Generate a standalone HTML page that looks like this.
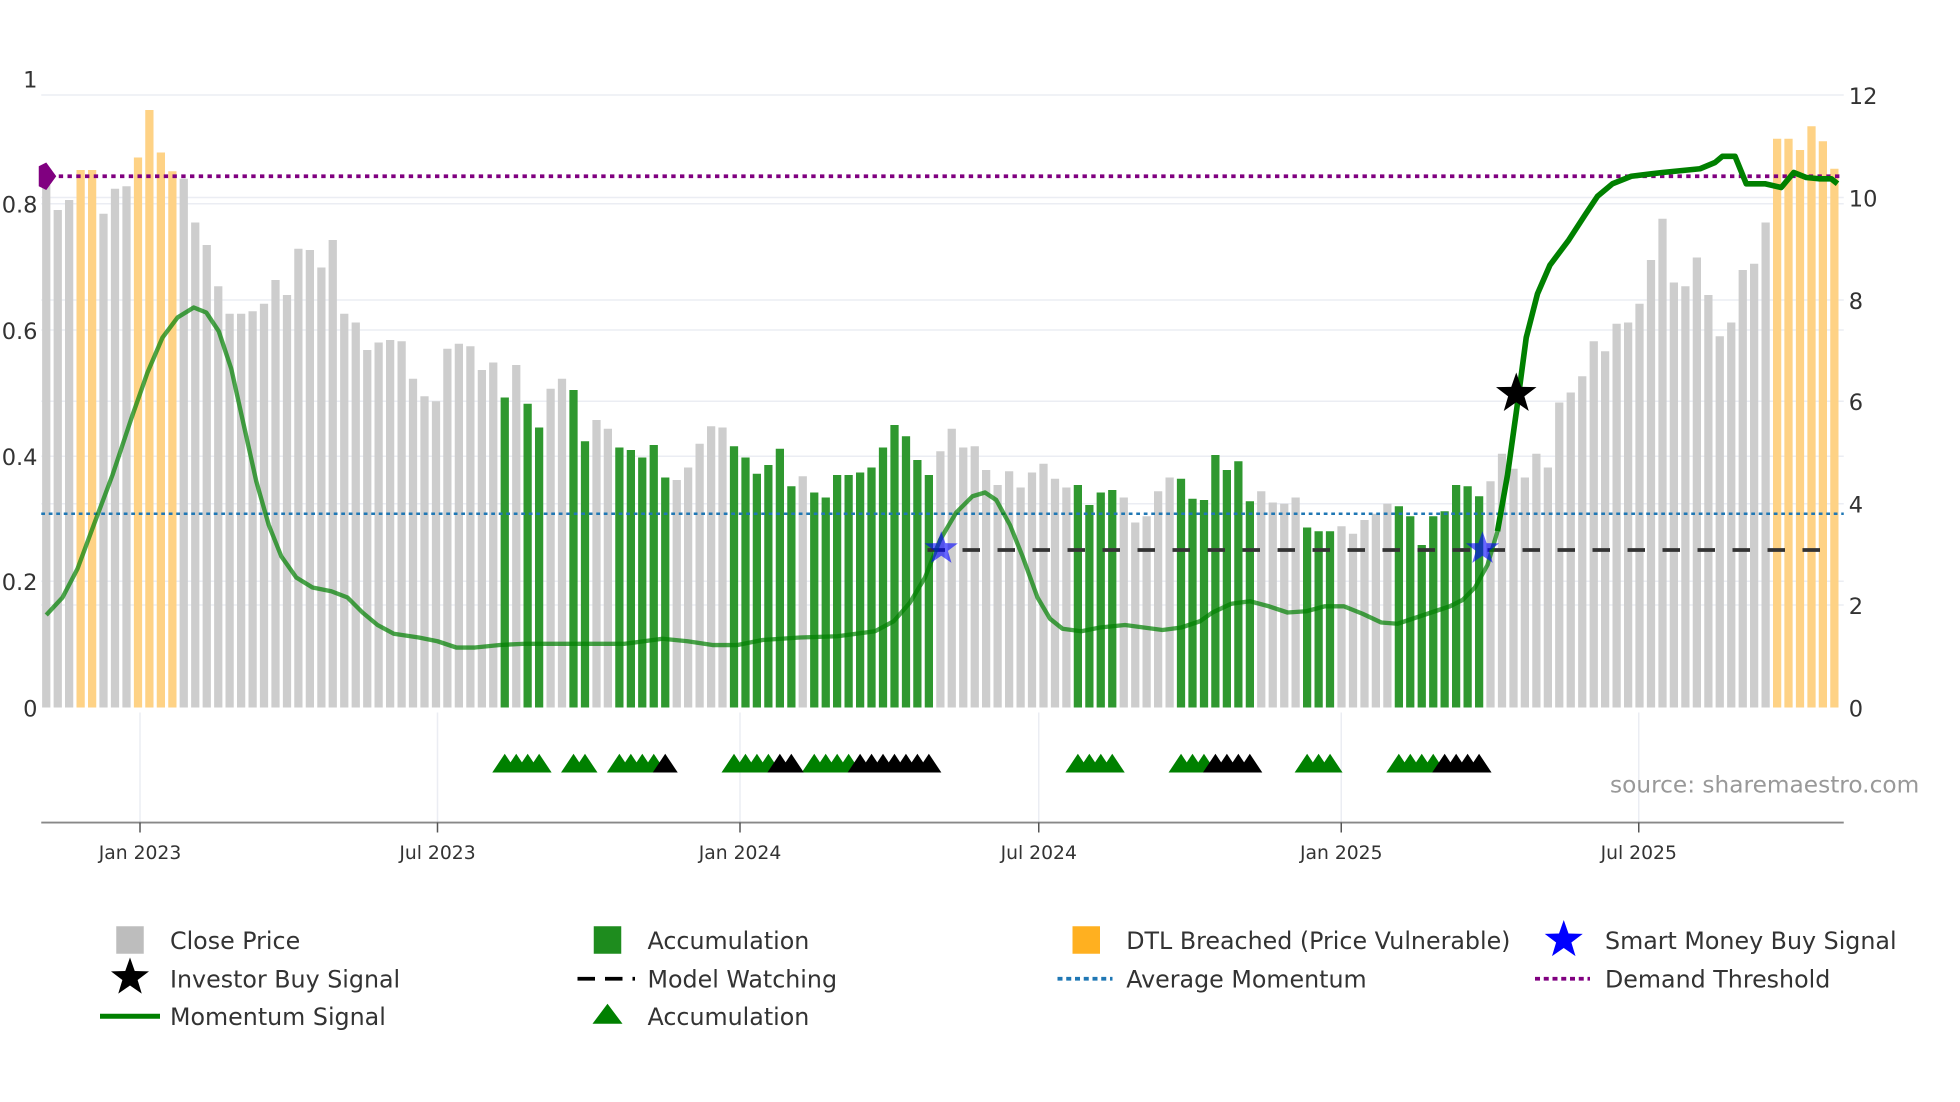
<!DOCTYPE html>
<html><head><meta charset="utf-8"><style>
html,body{margin:0;padding:0;background:#fff;width:1960px;height:1102px;overflow:hidden}
svg{display:block}
text{font-family:"DejaVu Sans","Liberation Sans",sans-serif;fill:#333}
</style></head><body>
<svg id="s" width="1960" height="1102" viewBox="0 0 1568 881.6" xmlns="http://www.w3.org/2000/svg">
<g stroke="#ebedf3" stroke-width="1.2">
<line x1="33" x2="1475" y1="76" y2="76"/><line x1="33" x2="1475" y1="158" y2="158"/><line x1="33" x2="1475" y1="240" y2="240"/><line x1="33" x2="1475" y1="321" y2="321"/><line x1="33" x2="1475" y1="403" y2="403"/><line x1="33" x2="1475" y1="484" y2="484"/>
<line x1="33" x2="1475" y1="163" y2="163"/><line x1="33" x2="1475" y1="264" y2="264"/><line x1="33" x2="1475" y1="365" y2="365"/><line x1="33" x2="1475" y1="465" y2="465"/>
<line x1="112" x2="112" y1="570" y2="658"/><line x1="350" x2="350" y1="570" y2="658"/><line x1="592" x2="592" y1="570" y2="658"/><line x1="831" x2="831" y1="570" y2="658"/><line x1="1073" x2="1073" y1="570" y2="658"/><line x1="1311" x2="1311" y1="570" y2="658"/>
</g>
<g id="bars"></g>
<line x1="33" x2="1475" y1="411" y2="411" stroke="#1f77b4" stroke-width="2" stroke-dasharray="3,3"/>
<line x1="33" x2="1475" y1="141" y2="141" stroke="#800080" stroke-width="3" stroke-dasharray="3.5,3.5"/>
<path d="M31 133 L37 130 L45 141 L37 152 L31 149Z" fill="#800080"/>
<line x1="742" x2="1462" y1="440" y2="440" stroke="#333" stroke-width="3" stroke-dasharray="14,14"/>
<polyline id="mom1" fill="none" stroke="#008000" stroke-opacity="0.7" stroke-width="3.5" stroke-linejoin="round"/>
<polyline id="mom2" fill="none" stroke="#008000" stroke-width="4.5" stroke-linejoin="round"/>
<g id="tri"></g>
<path id="st1" fill="#0000ff" fill-opacity="0.6"/>
<path id="st2" fill="#0000ff" fill-opacity="0.6"/>
<path id="st3" fill="#000"/>
<line x1="33" x2="1475" y1="658" y2="658" stroke="#888" stroke-width="1.5"/>
<g stroke="#555" stroke-width="1.2"><line x1="112" x2="112" y1="658" y2="666"/><line x1="350" x2="350" y1="658" y2="666"/><line x1="592" x2="592" y1="658" y2="666"/><line x1="831" x2="831" y1="658" y2="666"/><line x1="1073" x2="1073" y1="658" y2="666"/><line x1="1311" x2="1311" y1="658" y2="666"/></g>
<g font-size="15" text-anchor="middle"><text x="112" y="687">Jan 2023</text><text x="350" y="687">Jul 2023</text><text x="592" y="687">Jan 2024</text><text x="831" y="687">Jul 2024</text><text x="1073" y="687">Jan 2025</text><text x="1311" y="687">Jul 2025</text></g>
<g font-size="18" text-anchor="end"><text x="30" y="70">1</text><text x="30" y="170">0.8</text><text x="30" y="271">0.6</text><text x="30" y="372">0.4</text><text x="30" y="472">0.2</text><text x="30" y="573">0</text></g>
<g font-size="18"><text x="1479" y="83">12</text><text x="1479" y="165">10</text><text x="1479" y="247">8</text><text x="1479" y="328">6</text><text x="1479" y="410">4</text><text x="1479" y="491">2</text><text x="1479" y="573">0</text></g>
<text x="1288" y="634" font-size="18.6" fill="#999" style="fill:#999">source: sharemaestro.com</text>
<g font-size="19">
<rect x="93" y="741" width="22" height="22" fill="#bdbdbd"/><text x="136" y="759">Close Price</text>
<rect x="475" y="741" width="22" height="22" fill="#1e8c1e"/><text x="518" y="759">Accumulation</text>
<rect x="858" y="741" width="22" height="22" fill="#ffb020"/><text x="901" y="759">DTL Breached (Price Vulnerable)</text>
<path id="ls1" fill="#0000ff"/><text x="1284" y="759">Smart Money Buy Signal</text>
<path id="ls2" fill="#000"/><text x="136" y="790">Investor Buy Signal</text>
<line x1="462" x2="508" y1="783" y2="783" stroke="#000" stroke-width="3" stroke-dasharray="14,8"/><text x="518" y="790">Model Watching</text>
<line x1="846" x2="890" y1="783" y2="783" stroke="#1f77b4" stroke-width="3" stroke-dasharray="4,3"/><text x="901" y="790">Average Momentum</text>
<line x1="1228" x2="1272" y1="783" y2="783" stroke="#800080" stroke-width="3" stroke-dasharray="4,3"/><text x="1284" y="790">Demand Threshold</text>
<line x1="80" x2="128" y1="813" y2="813" stroke="#008000" stroke-width="4"/><text x="136" y="820">Momentum Signal</text>
<path d="M474 819 L486 803 L498 819Z" fill="#008000"/><text x="518" y="820">Accumulation</text>
</g>
</svg>
<script>
var tops=[148,168,160,136,136,171,151,149,126,88,122,137,143,178,196,229,251,251,249,243,224,236,199,200,214,192,251,258,280,274,272,273,303,317,321,279,275,277,296,290,318,292,323,342,311,303,312,353,336,343,358,360,366,356,382,384,374,355,341,342,357,366,379,372,359,389,381,394,398,380,380,378,374,358,340,349,368,380,361,343,358,357,376,388,377,390,378,371,383,390,388,404,394,392,398,418,413,393,382,383,399,400,364,376,369,401,393,402,403,398,422,425,425,421,427,416,411,403,405,413,436,413,409,388,389,397,385,363,375,382,363,374,322,314,301,273,281,259,258,243,208,175,226,229,206,236,269,258,216,211,178,111,111,120,101,113,135];
var green=[40,42,43,46,47,50,51,52,53,54,60,61,62,63,64,65,67,68,69,70,71,72,73,74,75,76,77,90,91,92,93,99,100,101,102,103,104,105,110,111,112,118,119,120,121,122,123,124,125];
var orange=[3,4,8,9,10,11,151,152,153,154,155,156];
var h="";
function X(i){return 37+i*9.17;}
tops.forEach(function(t,i){var c="#cdcdcd";if(green.indexOf(i)>=0)c="#2f982f";if(orange.indexOf(i)>=0)c="#fed285";
h+='<rect x="'+(X(i)-3.3).toFixed(1)+'" y="'+t+'" width="6.6" height="'+(566-t)+'" fill="'+c+'"/>';});
document.getElementById("bars").innerHTML=h;
var tg=[40,41,42,43,46,47,50,51,52,53,60,61,62,63,67,68,69,70,90,91,92,93,99,100,101,110,111,112,118,119,120,121],tb=[54,64,65,71,72,73,74,75,76,77,102,103,104,105,122,123,124,125];
var th="";
tg.forEach(function(i){var x=X(i);th+='<path d="M'+(x-10)+' 618 L'+x+' 603 L'+(x+10)+' 618Z" fill="#008000"/>';});
tb.forEach(function(i){var x=X(i);th+='<path d="M'+(x-10)+' 618 L'+x+' 603 L'+(x+10)+' 618Z" fill="#000"/>';});
document.getElementById("tri").innerHTML=th;
var pts=[[37,492],[50,478],[62,455],[75,420],[90,380],[105,335],[118,298],[130,270],[142,254],[155,246],[165,250],[175,265],[185,295],[195,340],[205,385],[215,420],[225,445],[237,462],[250,470],[265,473],[278,478],[290,490],[302,500],[315,507],[335,510],[350,513],[365,518],[380,518],[400,516],[420,515],[500,515],[530,511],[550,513],[570,516],[590,516],[610,512],[640,510],[670,509],[700,505],[715,497],[728,482],[740,462],[752,432],[765,410],[778,397],[788,394],[797,400],[808,420],[818,445],[830,478],[840,495],[850,503],[865,505],[880,502],[900,500],[915,502],[930,504],[945,502],[960,497],[970,490],[985,483],[1000,481],[1015,485],[1030,490],[1045,489],[1060,485],[1075,485],[1090,491],[1105,498],[1118,499],[1130,495],[1145,490],[1160,485],[1170,480],[1180,470],[1190,452],[1198,425]];
var pts2=[[1198,425],[1206,380],[1213,330],[1221,270],[1230,235],[1240,212],[1255,192],[1268,172],[1278,157],[1290,147],[1305,141],[1330,138],[1360,135],[1372,130],[1378,125],[1388,125],[1397,147],[1412,147],[1425,150],[1435,138],[1445,142],[1455,143],[1465,143],[1470,147]];
document.getElementById("mom1").setAttribute("points",pts.map(function(p){return p.join(",")}).join(" "));
document.getElementById("mom2").setAttribute("points",pts2.map(function(p){return p.join(",")}).join(" "));
function star(cx,cy,r){var d="";for(var k=0;k<10;k++){var a=-Math.PI/2+k*Math.PI/5,rr=k%2?r*0.4:r;d+=(k?"L":"M")+(cx+rr*Math.cos(a)).toFixed(1)+" "+(cy+rr*Math.sin(a)).toFixed(1);}return d+"Z";}
document.getElementById("st1").setAttribute("d",star(753,439,14));
document.getElementById("st2").setAttribute("d",star(1186,439,14));
document.getElementById("st3").setAttribute("d",star(1213,315,17));
document.getElementById("ls1").setAttribute("d",star(1251,752,16));
document.getElementById("ls2").setAttribute("d",star(104,782,16));
</script>
</body></html>
